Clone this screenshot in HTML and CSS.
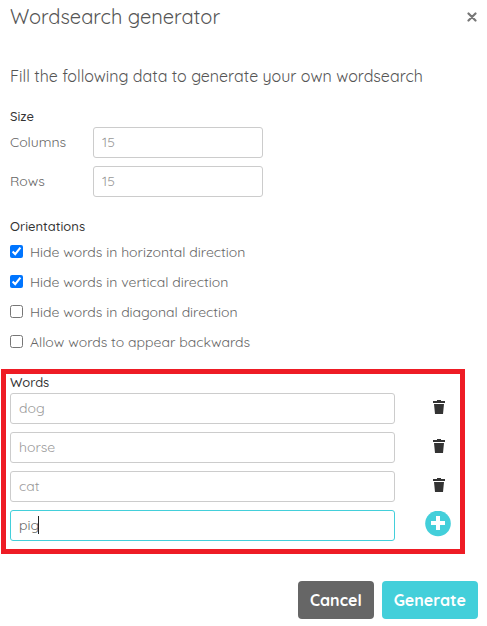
FILE: index.html
```
<!DOCTYPE html>
<html lang="en">
<head>
  <meta charset="UTF-8" />
  <meta name="viewport" content="width=device-width, initial-scale=1.0"/>
  <title>Wordsearch generator</title>
  <link rel="stylesheet" href="styles.css">
</head>
<body>
  <form class="modal">
    <header class="modal-header">
      <h1>Wordsearch generator</h1>
      <button type="button" class="close" aria-label="Close">
        <svg width="11" height="10" viewBox="0 0 11 10"><path d="M1.5 1.500l7 7M8.500 1.500l-7 7" fill="none" stroke="#777" stroke-width="2.2" stroke-linecap="round"/></svg>
      </button>
    </header>

    <p class="intro">Fill the following data to generate your own wordsearch</p>

    <section class="size">
      <h2>Size</h2>
      <div class="size-row">
        <label for="columns">Columns</label>
        <input type="text" id="columns" placeholder="15">
      </div>
      <div class="size-row">
        <label for="rows">Rows</label>
        <input type="text" id="rows" placeholder="15">
      </div>
    </section>

    <section class="orientations">
      <h2>Orientations</h2>
      <label class="check"><input type="checkbox" checked> Hide words in horizontal direction</label>
      <label class="check"><input type="checkbox" checked> Hide words in vertical direction</label>
      <label class="check"><input type="checkbox"> Hide words in diagonal direction</label>
      <label class="check"><input type="checkbox"> Allow words to appear backwards</label>
    </section>

    <section class="words">
      <h2>Words</h2>
      <div class="word-row">
        <div class="word-field"><input type="text" placeholder="dog" aria-label="Word 1"></div>
        <button type="button" class="icon-btn" aria-label="Delete dog">
          <svg width="14" height="14" viewBox="0 0 14 14" fill="#333"><path d="M6 0h4v1h4v2H2V1h4zM3 4h10l-1 10H4z"/></svg>
        </button>
      </div>
      <div class="word-row">
        <div class="word-field"><input type="text" placeholder="horse" aria-label="Word 2"></div>
        <button type="button" class="icon-btn" aria-label="Delete horse">
          <svg width="14" height="14" viewBox="0 0 14 14" fill="#333"><path d="M6 0h4v1h4v2H2V1h4zM3 4h10l-1 10H4z"/></svg>
        </button>
      </div>
      <div class="word-row">
        <div class="word-field"><input type="text" placeholder="cat" aria-label="Word 3"></div>
        <button type="button" class="icon-btn" aria-label="Delete cat">
          <svg width="14" height="14" viewBox="0 0 14 14" fill="#333"><path d="M6 0h4v1h4v2H2V1h4zM3 4h10l-1 10H4z"/></svg>
        </button>
      </div>
      <div class="word-row">
        <div class="word-field active">
          <input type="text" value="pig" aria-label="Word 4">
          <span class="caret"></span>
        </div>
        <button type="button" class="icon-btn" aria-label="Add word">
          <svg width="26" height="26" viewBox="0 0 26 26"><circle cx="13" cy="12.500" r="12.800" fill="#43cfda"/><path d="M13 5v14M6 12h14" stroke="#fff" stroke-width="4"/></svg>
        </button>
      </div>
    </section>

    <footer class="actions">
      <button type="button" class="btn cancel">Cancel</button>
      <button type="submit" class="btn generate">Generate</button>
    </footer>
  </form>
</body>
</html>
```
FILE: styles.css
```
* {
  box-sizing: border-box;
}
body {
  margin: 0;
  background: #fff;
  color: #666;
  font-family: Quicksand, Inter, "Open Sans", sans-serif;
  font-size: 14px;
  font-weight: 400;
}
button,
input {
  font: inherit;
}
button {
  border: 0;
  padding: 0;
  background: none;
  cursor: pointer;
}
svg {
  display: block;
}
.modal {
  padding: 5px 9px 7px 10px;
}
.modal-header {
  display: flex;
  justify-content: space-between;
  align-items: center;
}
h1 {
  margin: 0;
  font-size: 20px;
  font-weight: 400;
  line-height: 24px;
  color: #555;
}
h2 {
  margin: 0;
  font-size: 13px;
  font-weight: 500;
  line-height: 16px;
  padding-bottom: 3px;
  color: #333;
}
.intro {
  margin: 35px 0 20px;
  font-size: 16px;
  line-height: 24px;
  color: #555;
}
.size {
  margin-bottom: 21px;
}
.size-row {
  display: flex;
  align-items: center;
}
.size-row + .size-row,
.word-row + .word-row {
  margin-top: 8px;
}
.size-row label {
  width: 83px;
  padding-bottom: 2px;
}
.size-row input {
  width: 170px;
}
input[type="text"] {
  display: block;
  height: 31px;
  padding: 0 8px 2px;
  border: 1px solid #ccc;
  border-radius: 3px;
  background: #fff;
  color: #666;
}
input::placeholder {
  color: #999;
}
.check {
  display: flex;
  align-items: center;
  height: 30px;
  padding-bottom: 1px;
}
.check input {
  width: 13px;
  height: 13px;
  margin: 0 7px 0 0;
}
.words {
  margin: 12px 13px 27px -9px;
  padding: 0 0 8px 4px;
  border: 5px solid #ee1c25;
}
.word-row {
  display: flex;
  align-items: flex-start;
}
.word-field {
  position: relative;
  flex: 1;
  margin-right: 21px;
}
.word-field input {
  width: 100%;
}
.word-field.active input {
  border-color: #43cfda;
}
.caret {
  position: absolute;
  top: 6px;
  left: 28px;
  width: 1px;
  height: 18px;
  background: #222;
}
.icon-btn {
  display: flex;
  justify-content: center;
  align-items: center;
  width: 44px;
  height: 27px;
}
.actions {
  display: flex;
  justify-content: flex-end;
  gap: 8px;
}
.btn {
  height: 38px;
  padding: 0 12px;
  border-radius: 4px;
  color: #fff;
  font-size: 16px;
  font-weight: 700;
}
.cancel {
  background: #666;
}
.generate {
  background: #43cfda;
}
```
